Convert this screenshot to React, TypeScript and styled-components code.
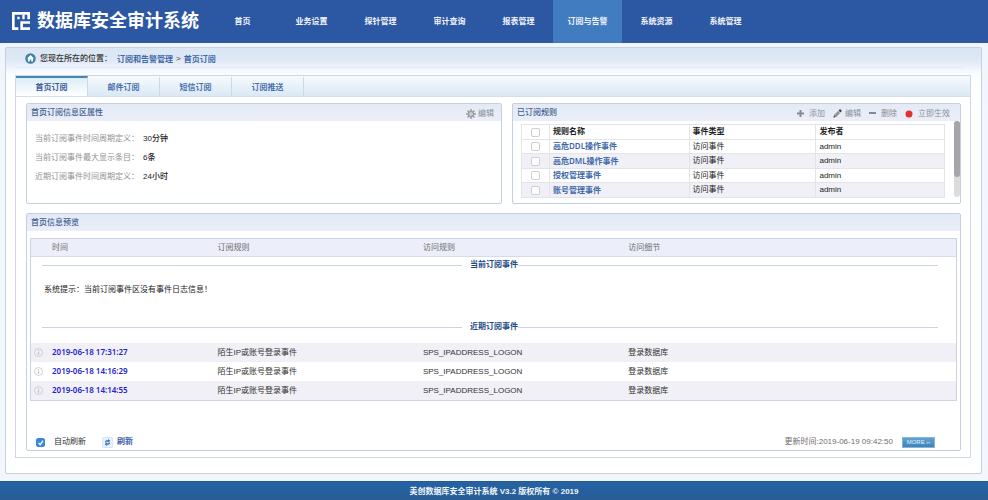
import React, { useState } from "react";
import styled, { createGlobalStyle } from "styled-components";

const GlobalStyle = createGlobalStyle`
  * { box-sizing: border-box; }
  body {
    margin: 0;
    background: #f3f6fa;
    color: #333;
    font: 8px/12px "Liberation Sans", "Noto Sans CJK SC", sans-serif;
  }
  a { text-decoration: none; }
  button, input { font: inherit; }
  table { border-collapse: separate; border-spacing: 0; }
`;

const Page = styled.div`
  min-height: 100vh;
  display: flex;
  flex-direction: column;
  background: linear-gradient(#eef6fe, #f3f6fa 120px);
`;

const Header = styled.header`
  display: flex;
  height: 43px;
  background: #2c57a3;
`;

const Brand = styled.h1`
  display: flex;
  align-items: center;
  gap: 7px;
  width: 208px;
  flex: none;
  margin: 0;
  padding: 0 0 1px 12px;
  color: #fff;
  font-size: 18px;
  font-weight: 700;
  line-height: 24px;
  white-space: nowrap;
`;

const Nav = styled.nav`
  display: flex;
`;

const NavLink = styled.a<{ $active: boolean }>`
  display: flex;
  align-items: center;
  justify-content: center;
  width: 69px;
  color: #f0f4fa;
  font-weight: 700;
  background: ${(p) => (p.$active ? "#417bc0" : "transparent")};
`;

const Main = styled.main`
  flex: 1;
  margin: 4px 6px 7px 5px;
  padding: 0 10px 15px 9px;
  border: 1px solid #c6d2e2;
  border-radius: 2px;
  background: linear-gradient(#dbe6f4, #dfe8f5 12px, #fbfdff 26px, #fff 40px);
  display: flex;
  flex-direction: column;
`;

const Crumbs = styled.div`
  display: flex;
  align-items: center;
  height: 20px;
  margin: 0 9px 7px 0;
  padding: 2px 0 0 10px;
  border-bottom: 1px solid #e4eaf3;
`;

const CrumbLabel = styled.span`
  margin: 0 5px 0 4px;
  font-weight: 500;
`;

const StrongLink = styled.a`
  color: #4068a9;
  font-family: "Noto Sans", "Noto Sans CJK SC", sans-serif;
  font-weight: 600;
`;

const Separator = styled.span`
  margin: 0 3px;
`;

const TabBox = styled.div`
  flex: 1;
  display: flex;
  flex-direction: column;
  border: 1px solid #ccd8e6;
  background: #fff;
`;

const TabBar = styled.div`
  display: flex;
  height: 21px;
  border-bottom: 1px solid #d3e0ec;
  background: linear-gradient(#f6fafd, #dbe8f4);
`;

const Tab = styled.button<{ $active: boolean }>`
  width: 72px;
  padding: 2px 0 0;
  border: 0;
  border-right: 1px solid #c9d9e8;
  border-top: 2px solid ${(p) => (p.$active ? "#4389ac" : "transparent")};
  background: ${(p) => (p.$active ? "linear-gradient(#dcecf6, #fff)" : "none")};
  color: ${(p) => (p.$active ? "#3a5c98" : "#4870ad")};
  font-weight: 600;
  cursor: pointer;
`;

const Content = styled.div`
  flex: 1;
  display: flex;
  flex-direction: column;
  gap: 9px;
  padding: 6px 9px 6px 10px;
`;

const TopRow = styled.div`
  display: grid;
  grid-template-columns: minmax(0, 53fr) minmax(0, 50fr);
  gap: 10px;
`;

const Panel = styled.section`
  border: 1px solid #c3cfe2;
  border-radius: 2px;
  background: #fff;
  min-height: 101px;
`;

const PanelHead = styled.div<{ $end?: number }>`
  display: flex;
  align-items: center;
  justify-content: space-between;
  height: 17px;
  padding: 0 ${(p) => p.$end ?? 7}px 0 4px;
  background: linear-gradient(#e4eaf5, #ebeef9);
`;

const PanelTitle = styled.h2`
  margin: 0;
  color: #3f5d91;
  font-size: 8px;
  font-weight: 500;
`;

const Tools = styled.div`
  display: flex;
  gap: 8px;
  padding-top: 2px;
`;

const ToolButton = styled.button<{ $gap: number }>`
  display: flex;
  align-items: center;
  gap: ${(p) => p.$gap}px;
  padding: 0;
  border: 0;
  background: none;
  color: #8c8e94;
  cursor: pointer;
`;

const Properties = styled.dl`
  display: grid;
  grid-template-columns: 108px 1fr;
  margin: 0;
  padding: 8px 8px 0;
  line-height: 19px;
`;

const Term = styled.dt`
  color: #929292;
`;

const Value = styled.dd`
  margin: 0;
  color: #222;
  font-weight: 500;
`;

const RuleArea = styled.div`
  display: flex;
  align-items: flex-start;
  gap: 9px;
  padding-left: 8px;
`;

const RuleTable = styled.table`
  flex: 1;
  margin-top: 3px;
  table-layout: fixed;
  border-top: 1px solid #e2e4ea;
  border-right: 1px solid #e2e4ea;
  line-height: 12px;

  th, td {
    height: 14px;
    padding: 0 0 0 3px;
    text-align: left;
    border-left: 1px solid #e2e4ea;
    border-bottom: 1px solid #e2e4ea;
    color: #222;
  }
  th { height: 15px; font-weight: 700; }
  tbody tr:nth-child(even) { background: #f0f0f6; }
  tbody tr:nth-child(even) td { height: 15px; }
  tr > :first-child { padding: 0; text-align: center; line-height: 0; }
`;

const RuleCheckCol = styled.col`
  width: 28px;
`;

const RuleNameCol = styled.col`
  width: 33%;
`;

const RuleTypeCol = styled.col`
  width: 30%;
`;

const Tick = styled.input`
  appearance: none;
  display: inline-block;
  flex: none;
  width: 9px;
  height: 9px;
  margin: 0;
  vertical-align: middle;
  border: 1px solid #cfcfd3;
  border-radius: 2px;
  background: #fff;

  &:checked {
    border-color: #3c87dc;
    background: #3c87dc
      url("data:image/svg+xml,%3Csvg xmlns='http://www.w3.org/2000/svg' viewBox='0 0 8 8'%3E%3Cpath d='M2 4.2l1.5 1.6L6.2 2' fill='none' stroke='white' stroke-width='1.2'/%3E%3C/svg%3E")
      center / 8px 8px no-repeat;
  }
`;

const ScrollTrack = styled.div`
  width: 6px;
  height: 76px;
  border-radius: 3px;
  background: #dcdcde;
`;

const ScrollThumb = styled.div`
  height: 56px;
  border-radius: 3px;
  background: #a6a6a8;
`;

const PreviewPanel = styled(Panel)`
  flex: 1;
  display: flex;
  flex-direction: column;
`;

const EventFrame = styled.div`
  margin: 7px 3px 0;
  border: 1px solid #ccd3e6;
`;

const EventTable = styled.table`
  width: 100%;
  table-layout: fixed;

  th {
    height: 18px;
    padding: 0;
    text-align: left;
    font-weight: 400;
    color: #6c6c70;
    background: #eceef9;
    border-bottom: 1px solid #d6dbec;
  }
`;

const IconCol = styled.col`
  width: 21px;
`;

const TimeCol = styled.col`
  width: 17.9%;
`;

const WideCol = styled.col`
  width: 22.2%;
`;

const EventRow = styled.tr<{ $shaded: boolean }>`
  background: ${(p) => (p.$shaded ? "#f0f0f6" : "#fff")};

  td { height: 19px; padding: 0; }
`;

const IconCell = styled.td`
  text-align: center;
  line-height: 0;
  svg { margin-right: 7px; }
`;

const TimeLink = styled.a`
  color: #2323cf;
  font-family: "Noto Sans", sans-serif;
  font-weight: 600;
`;

const GroupCell = styled.td<{ $after: number }>`
  padding: 2px 18px ${(p) => p.$after}px 11px;
`;

const GroupHeading = styled.div`
  display: flex;
  align-items: center;
  color: #244a86;
  font-weight: 700;

  &::before, &::after {
    content: "";
    flex: 1;
    height: 1px;
    background: #cbd3e4;
  }
  &::before { margin-right: 8px; }
`;

const Notice = styled.td`
  height: 46px;
  padding: 0 0 12px 13px;
  color: #222;
`;

const BottomBar = styled.div`
  display: flex;
  align-items: center;
  height: 12px;
  margin: auto 25px 2px 9px;
`;

const AutoRefresh = styled.label`
  display: flex;
  align-items: center;
  gap: 9px;
  margin-right: 16px;
`;

const RefreshButton = styled.button`
  display: flex;
  align-items: center;
  gap: 4px;
  padding: 0;
  border: 0;
  background: none;
  color: #3a62a4;
  font-weight: 700;
  cursor: pointer;
`;

const Updated = styled.span`
  margin: 0 9px 0 auto;
  color: #6e6e6e;
`;

const MoreButton = styled.button`
  width: 33px;
  height: 11px;
  padding: 0;
  border: 1px solid #86b4d4;
  background: linear-gradient(#5fa3d3, #3f83b8);
  color: #dff1fb;
  font-size: 6px;
  line-height: 9px;
  white-space: nowrap;
  cursor: pointer;
`;

const Footer = styled.footer`
  height: 19px;
  border-top: 1px solid #2a5a88;
  background: linear-gradient(#2463a5, #295c94);
  color: #f1f6fb;
  font-weight: 600;
  line-height: 19px;
  text-align: center;
`;

const Logo = () => (
  <svg width="18" height="18" viewBox="0 0 54 54" fill="#fff" aria-hidden="true">
    <path d="M0 0H54V22H46V8H8V46H19V54H0Z" />
    <path d="M16 14H23V22H16ZM31 8H38V22H31Z" />
    <path d="M25 28H54V35H33V46H54V54H25Z" />
  </svg>
);

const HomeIcon = () => (
  <svg width="11" height="11" viewBox="0 0 22 22" aria-hidden="true">
    <circle cx="11" cy="11" r="10.500" fill="#3e83a3" />
    <path d="M11 4l7 7h-2v6h-3.500v-4h-3v4H6v-6H4z" fill="#fff" />
  </svg>
);

const GearIcon = () => (
  <svg width="10" height="10" viewBox="0 0 20 20" fill="none" stroke="#9a9ca3" aria-hidden="true">
    <circle cx="10" cy="10" r="5" strokeWidth="3" />
    <path
      d="M10 0v4M10 16v4M0 10h4M16 10h4M3 3l3 3M14 14l3 3M3 17l3-3M14 6l3-3"
      strokeWidth="3"
    />
    <circle cx="10" cy="10" r="1.500" />
  </svg>
);

const PlusIcon = () => (
  <svg width="7" height="7" viewBox="0 0 7 7" fill="none" aria-hidden="true">
    <path d="M3.500 0v7M0 3.500h7" stroke="#868a92" strokeWidth="2" />
  </svg>
);

const MinusIcon = () => (
  <svg width="7" height="7" viewBox="0 0 7 7" fill="none" aria-hidden="true">
    <path d="M0 3h7" stroke="#868a92" strokeWidth="2" />
  </svg>
);

const PencilIcon = () => (
  <svg width="9" height="9" viewBox="0 0 18 18" aria-hidden="true">
    <path d="M1 17l1.500-5.500L10 4l4 4-7.500 7.500z" fill="#858585" />
    <path d="M11 3l2-2q1.500-1 3 .5t1 3.500l-2 2z" fill="#3e3e42" />
    <path d="M1 17l1-3.500 2.500 2.500z" fill="#333" />
    <path d="M4.500 12.500l6-6" stroke="#d5d5d5" />
  </svg>
);

const DotIcon = () => (
  <svg width="8" height="8" viewBox="0 0 8 8" aria-hidden="true">
    <circle cx="4" cy="4" r="3.500" fill="#e3302c" />
  </svg>
);

const InfoIcon = () => (
  <svg width="9" height="9" viewBox="0 0 18 18" fill="none" stroke="#c3c3c6" aria-hidden="true">
    <circle cx="9" cy="9" r="8" strokeWidth="1.500" />
    <path d="M9 8v6M9 4v2.500" strokeWidth="2.500" />
  </svg>
);

const RefreshIcon = () => (
  <svg width="11" height="11" viewBox="0 0 20 20" aria-hidden="true">
    <rect x="0.500" y="0.500" width="19" height="19" rx="3" fill="#e5f1fc" stroke="#b9d3ec" />
    <path d="M5.500 10V9q0-3 3-3h2.500V3.500l4 3.500-4 3.500V8.500H8L5.500 11z" fill="#3f73b0" />
    <path d="M14.500 10v1q0 3-3 3H9v2.500L5 13l4-3.500v2H12l2.500-2.500z" fill="#3f73b0" />
  </svg>
);

const navItems = [
  "首页",
  "业务设置",
  "探针管理",
  "审计查询",
  "报表管理",
  "订阅与告警",
  "系统资源",
  "系统管理",
];
const tabs = ["首页订阅", "邮件订阅", "短信订阅", "订阅推送"];
const properties = [
  ["当前订阅事件时间周期定义：", "30分钟"],
  ["当前订阅事件最大显示条目：", "6条"],
  ["近期订阅事件时间周期定义：", "24小时"],
];
const rules = ["高危DDL操作事件", "高危DML操作事件", "授权管理事件", "账号管理事件"];
const events = ["2019-06-18 17:31:27", "2019-06-18 14:16:29", "2019-06-18 14:14:55"];

export default function App() {
  const [tab, setTab] = useState(tabs[0]);
  const [auto, setAuto] = useState(true);

  return (
    <Page>
      <GlobalStyle />
      <Header>
        <Brand>
          <Logo />
          数据库安全审计系统
        </Brand>
        <Nav>
          {navItems.map((item) => (
            <NavLink key={item} href="#" $active={item === "订阅与告警"}>
              {item}
            </NavLink>
          ))}
        </Nav>
      </Header>

      <Main>
        <Crumbs>
          <HomeIcon />
          <CrumbLabel>您现在所在的位置：</CrumbLabel>
          <StrongLink href="#">订阅和告警管理</StrongLink>
          <Separator>&gt;</Separator>
          <StrongLink href="#">首页订阅</StrongLink>
        </Crumbs>

        <TabBox>
          <TabBar role="tablist">
            {tabs.map((name) => (
              <Tab
                key={name}
                role="tab"
                aria-selected={name === tab}
                $active={name === tab}
                onClick={() => setTab(name)}
              >
                {name}
              </Tab>
            ))}
          </TabBar>

          <Content>
            <TopRow>
              <Panel>
                <PanelHead>
                  <PanelTitle>首页订阅信息区属性</PanelTitle>
                  <Tools>
                    <ToolButton $gap={2}>
                      <GearIcon />
                      编辑
                    </ToolButton>
                  </Tools>
                </PanelHead>
                <Properties>
                  {properties.map(([term, value]) => (
                    <React.Fragment key={term}>
                      <Term>{term}</Term>
                      <Value>{value}</Value>
                    </React.Fragment>
                  ))}
                </Properties>
              </Panel>

              <Panel>
                <PanelHead $end={10}>
                  <PanelTitle>已订阅规则</PanelTitle>
                  <Tools>
                    <ToolButton $gap={5}>
                      <PlusIcon />
                      添加
                    </ToolButton>
                    <ToolButton $gap={3}>
                      <PencilIcon />
                      编辑
                    </ToolButton>
                    <ToolButton $gap={5}>
                      <MinusIcon />
                      删除
                    </ToolButton>
                    <ToolButton $gap={5}>
                      <DotIcon />
                      立即生效
                    </ToolButton>
                  </Tools>
                </PanelHead>
                <RuleArea>
                  <RuleTable>
                    <colgroup>
                      <RuleCheckCol />
                      <RuleNameCol />
                      <RuleTypeCol />
                      <col />
                    </colgroup>
                    <thead>
                      <tr>
                        <th>
                          <Tick type="checkbox" aria-label="全选" />
                        </th>
                        <th>规则名称</th>
                        <th>事件类型</th>
                        <th>发布者</th>
                      </tr>
                    </thead>
                    <tbody>
                      {rules.map((rule) => (
                        <tr key={rule}>
                          <td>
                            <Tick type="checkbox" aria-label={rule} />
                          </td>
                          <td>
                            <StrongLink href="#">{rule}</StrongLink>
                          </td>
                          <td>访问事件</td>
                          <td>admin</td>
                        </tr>
                      ))}
                    </tbody>
                  </RuleTable>
                  <ScrollTrack>
                    <ScrollThumb />
                  </ScrollTrack>
                </RuleArea>
              </Panel>
            </TopRow>

            <PreviewPanel>
              <PanelHead>
                <PanelTitle>首页信息预览</PanelTitle>
              </PanelHead>
              <EventFrame>
                <EventTable>
                  <colgroup>
                    <IconCol />
                    <TimeCol />
                    <WideCol />
                    <WideCol />
                    <col />
                  </colgroup>
                  <thead>
                    <tr>
                      <th />
                      <th>时间</th>
                      <th>订阅规则</th>
                      <th>访问规则</th>
                      <th>访问细节</th>
                    </tr>
                  </thead>
                  <tbody>
                    <tr>
                      <GroupCell colSpan={5} $after={2}>
                        <GroupHeading>当前订阅事件</GroupHeading>
                      </GroupCell>
                    </tr>
                    <tr>
                      <Notice colSpan={5}>系统提示：当前订阅事件区没有事件日志信息！</Notice>
                    </tr>
                  </tbody>
                  <tbody>
                    <tr>
                      <GroupCell colSpan={5} $after={10}>
                        <GroupHeading>近期订阅事件</GroupHeading>
                      </GroupCell>
                    </tr>
                    {events.map((time, index) => (
                      <EventRow key={time} $shaded={index % 2 === 0}>
                        <IconCell>
                          <InfoIcon />
                        </IconCell>
                        <td>
                          <TimeLink href="#">{time}</TimeLink>
                        </td>
                        <td>陌生IP或账号登录事件</td>
                        <td>SPS_IPADDRESS_LOGON</td>
                        <td>登录数据库</td>
                      </EventRow>
                    ))}
                  </tbody>
                </EventTable>
              </EventFrame>
              <BottomBar>
                <AutoRefresh>
                  <Tick
                    type="checkbox"
                    checked={auto}
                    onChange={(e) => setAuto(e.target.checked)}
                  />
                  自动刷新
                </AutoRefresh>
                <RefreshButton>
                  <RefreshIcon />
                  刷新
                </RefreshButton>
                <Updated>更新时间:2019-06-19 09:42:50</Updated>
                <MoreButton>MORE ››</MoreButton>
              </BottomBar>
            </PreviewPanel>
          </Content>
        </TabBox>
      </Main>

      <Footer>美创数据库安全审计系统 V3.2 版权所有 © 2019</Footer>
    </Page>
  );
}
